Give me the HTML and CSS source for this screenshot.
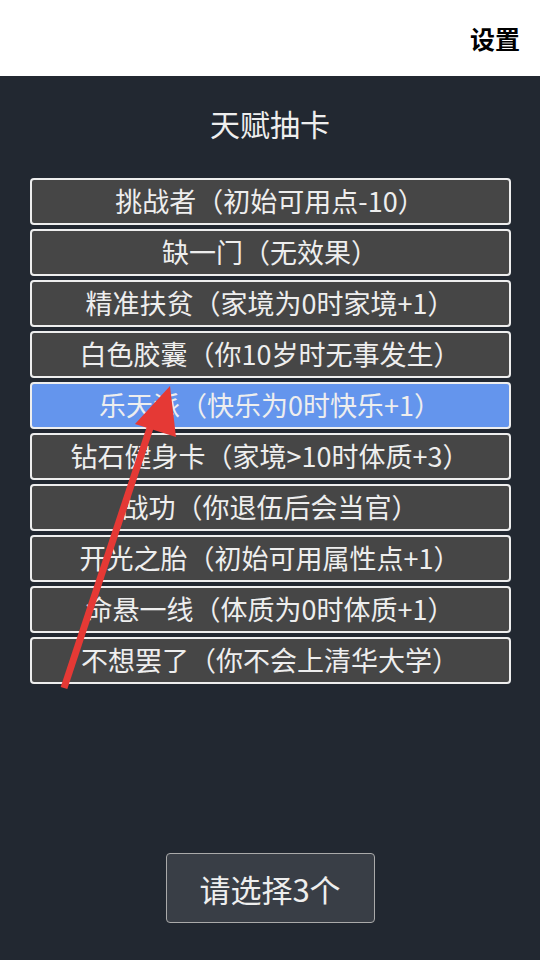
FILE: index.html
```html
<!DOCTYPE html>
<html lang="zh">
<head>
  <meta charset="UTF-8" />
  <meta name="viewport" content="width=device-width, initial-scale=1.0"/>
  <title>天赋抽卡</title>
  <link rel="stylesheet" href="styles.css">
</head>
<body>

  <header class="topbar">
    <span class="settings">设置</span>
  </header>

  <main class="talent">
    <h1 class="title">天赋抽卡</h1>

    <ul class="cards">
      <li class="card">挑战者（初始可用点-10）</li>
      <li class="card">缺一门（无效果）</li>
      <li class="card">精准扶贫（家境为0时家境+1）</li>
      <li class="card">白色胶囊（你10岁时无事发生）</li>
      <li class="card selected">乐天派（快乐为0时快乐+1）</li>
      <li class="card">钻石健身卡（家境&gt;10时体质+3）</li>
      <li class="card">战功（你退伍后会当官）</li>
      <li class="card">开光之胎（初始可用属性点+1）</li>
      <li class="card">命悬一线（体质为0时体质+1）</li>
      <li class="card">不想罢了（你不会上清华大学）</li>
    </ul>

    <button class="choose">请选择3个</button>

    <svg class="arrow" width="540" height="960" viewBox="0 0 540 960">
      <line x1="64" y1="688" x2="150" y2="428" stroke="#e53935" stroke-width="7"/>
      <polygon points="170,386 176,437 135,424" fill="#e53935"/>
    </svg>
  </main>

</body>
</html>
```

FILE: styles.css
```css
body {
  margin: 0;
  font-family: "Noto Sans CJK SC", "Noto Sans", sans-serif;
  background-color: #222831;
}

.topbar {
  height: 76px;
  background: #ffffff;
  display: flex;
  align-items: center;
  justify-content: flex-end;
  padding: 0 20px;
  box-sizing: border-box;
}

.settings {
  font-size: 25px;
  font-weight: bold;
  color: #000;
}

.title {
  margin: 24px 0 0;
  height: 46px;
  line-height: 46px;
  font-size: 30px;
  font-weight: normal;
  color: #eeeeee;
}

.talent {
  height: 884px;
  display: flex;
  flex-direction: column;
  align-items: center;
}

.cards {
  list-style: none;
  margin: 32px 0 0;
  padding: 0;
  display: flex;
  flex-direction: column;
  gap: 4px;
}

.card {
  width: 481px;
  height: 47px;
  box-sizing: border-box;
  border: 2px solid #eeeeee;
  border-radius: 4px;
  background: #464646;
  color: #eeeeee;
  font-size: 27px;
  line-height: 41px;
  text-align: center;
  white-space: nowrap;
}

.card.selected {
  background: #6495ed;
}

.choose {
  margin-top: 169px;
  width: 209px;
  height: 70px;
  background: #393e46;
  border: 1px solid #aaaaaa;
  border-radius: 4px;
  color: #eeeeee;
  font-family: inherit;
  font-size: 31px;
  padding: 0;
}

.arrow {
  position: absolute;
  left: 0;
  top: 0;
  pointer-events: none;
}
```
